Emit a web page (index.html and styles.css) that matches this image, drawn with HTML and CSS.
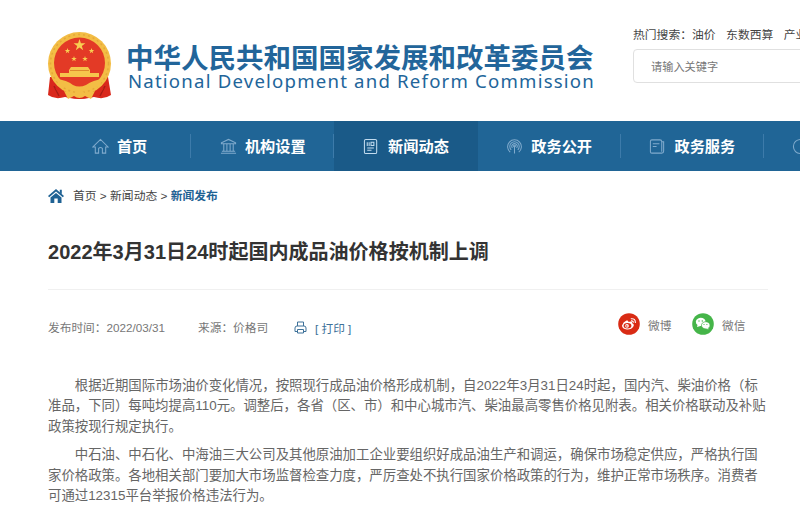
FILE: index.html
```html
<!DOCTYPE html>
<html lang="zh-CN">
<head>
  <meta charset="UTF-8">
  <meta name="viewport" content="width=device-width, initial-scale=1.0">
  <title>2022年3月31日24时起国内成品油价格按机制上调</title>
  <link rel="stylesheet" href="styles.css">
</head>
<body>
  <!-- Header -->
  <header class="header">
    <svg class="emblem" viewBox="0 0 66 70">
      <path d="M3 46 L1 64 Q8 69 18 66 L33 68 L47 66 Q57 69 64 64 L61 46 Z" fill="#d9281c"/>
      <path d="M7 55 L12 65 M58 55 L53 65" stroke="#a91d14" stroke-width="1.5"/>
      <circle cx="32.500" cy="32.500" r="31.500" fill="#f3bd45"/>
      <circle cx="32.500" cy="32.500" r="29" fill="none" stroke="#e5a93a" stroke-width="1.500" stroke-dasharray="2 3"/>
      <circle cx="32.500" cy="32" r="25.500" fill="#e33a26"/>
      <path d="M32.500 8 L33.900 12.300 H38.400 L34.800 15 L36.200 19.300 L32.500 16.600 L28.800 19.300 L30.200 15 L26.600 12.300 H31.100 Z" fill="#f8cf52"/>
      <g fill="#f8cf52">
        <path id="star" d="M20.500 17 L21.200 19 H23.300 L21.600 20.200 L22.200 22.300 L20.500 21 L18.800 22.300 L19.400 20.200 L17.700 19 H19.800 Z"/>
        <use href="#star" x="24"/>
        <use href="#star" x="6.500" y="8"/>
        <use href="#star" x="17.500" y="8"/>
      </g>
      <path d="M22 39 L24 36 H41 L43 39 V42 H52 V46 H13 V42 H22 Z" fill="#f6c64c"/>
      <path d="M23 39.500 H42" stroke="#dd8b2e"/>
      <path d="M9 48 Q20 49 26 54 Q32 57 39 54 Q46 49 56 48 L52 56 Q43 55 39 58 Q32 62 26 58 Q21 55 13 56 Z" fill="#f3bd45"/>
      <path d="M8 57 Q32 72 57 57 L52 64 Q32 72 13 64 Z" fill="#d9281c"/>
      <path d="M17 60 L27 62 Q32.500 58 38 62 L48 60 L44 68 L38 65 Q32.500 69 27 65 L21 68 Z" fill="#f3bd45"/>
    </svg>
    <div class="site-name">
      <div class="name-cn">中华人民共和国国家发展和改革委员会</div>
      <div class="name-en">National Development and Reform Commission</div>
    </div>
    <div class="search">
      <div class="hot"><span>热门搜索：油价</span><span>东数西算</span><span>产业</span></div>
      <div class="search-box">请输入关键字</div>
    </div>
  </header>

  <!-- Navigation -->
  <nav class="nav">
    <a class="nav-item">
      <svg class="nav-icon" viewBox="0 0 18 18"><path d="M1 9.500 L9 1.500 L17 9.500 H14.500 V16 H11 V11 Q9 9 7 11 V16 H3.500 V9.500 Z"/></svg>
      <span>首页</span>
    </a>
    <a class="nav-item">
      <svg class="nav-icon" viewBox="0 0 18 18"><path d="M1.500 6 V5 L9 1.500 L16.500 5 V6 Z M4 6 V14 M7.300 6 V14 M10.700 6 V14 M14 6 V14 M2 14 H16 M1 16.200 H17"/></svg>
      <span>机构设置</span>
    </a>
    <a class="nav-item active">
      <svg class="nav-icon" viewBox="0 0 18 18"><rect x="1.500" y="1.500" width="13" height="15" rx="1.500"/><path d="M4.500 4.500 V8.500 M6.500 4.500 V8.500 M8.500 4.500 H11.500 V8 H8.500 Z M4.500 10.500 H11.500 M4.500 13 H9"/></svg>
      <span>新闻动态</span>
    </a>
    <a class="nav-item">
      <svg class="nav-icon" viewBox="0 0 18 18"><path d="M4.500 15 A7.300 7.300 0 1 1 13.500 15 M5.500 12.500 A5 5 0 1 1 12.500 12.500 M6.800 10.500 A2.800 2.800 0 1 1 11.200 10.500 M9 8.500 V16.500"/><circle cx="9" cy="8.500" r="1"/></svg>
      <span>政务公开</span>
    </a>
    <a class="nav-item">
      <svg class="nav-icon" viewBox="0 0 18 18"><path d="M13.500 14.500 V4 Q13.500 2 11.500 2 H3 Q1.500 2 1.500 3.500 V14.500 Q1.500 16 3 16 H13.500 Q15.500 16 15.500 14 V4 H13.500 M4 6 H11 M4 9 H8"/></svg>
      <span>政务服务</span>
    </a>
    <a class="nav-item">
      <svg class="nav-icon" viewBox="0 0 18 18"><circle cx="9" cy="9" r="7.500"/><path d="M9 5 V9 H12"/></svg>
    </a>
  </nav>

  <main class="main">
    <div class="crumbs">
      <svg class="home" viewBox="0 0 16 14"><path d="M8 0 L16 7 L14.800 8.200 L8 2.500 L1.200 8.200 L0 7 Z M11.800 0.800 H13.800 V5 L11.800 3.200 Z M8 4 L13.500 8.500 V14 H9.700 V9.500 H6.300 V14 H2.500 V8.500 Z"/></svg>
      <span>首页 &gt; 新闻动态 &gt; <b>新闻发布</b></span>
    </div>

    <h1 class="title">2022年3月31日24时起国内成品油价格按机制上调</h1>

    <div class="meta">
      <span class="date">发布时间：2022/03/31</span>
      <span class="source">来源：价格司</span>
      <span class="print">
        <svg class="printer" viewBox="0 0 13 13"><path d="M3.500 5 V1 H9.500 V5 M3.500 10.500 H1 V7 Q1 5 3 5 H10 Q12 5 12 7 V10.500 H9.500 M3.500 8.500 H9.500 V12 H3.500 Z"/></svg>
        [ 打印 ]
      </span>
      <span class="share">
        <svg class="share-icon" viewBox="0 0 22 22">
          <circle cx="11" cy="11" r="10.800" fill="#d92b14"/>
          <path d="M4 12.500 Q5 9 8.500 7.600 Q10.700 7 10.400 9 Q14.500 7.600 14.200 10.200 Q16.500 11 15.500 13.200 Q13.500 16.600 9 16.400 Q4 16 4 12.500 Z" fill="#fff"/>
          <ellipse cx="9.500" cy="12.800" rx="3.900" ry="2.700" fill="#d92b14"/>
          <circle cx="9" cy="12.900" r="1.800" fill="#fff"/>
          <circle cx="8.800" cy="13" r="0.800" fill="#d92b14"/>
          <path d="M12.800 5.800 Q17.500 5 17.400 10 M13 7.900 Q15.500 7.600 15.300 9.800" fill="none" stroke="#fff" stroke-width="1.100"/>
        </svg>
        微博
      </span>
      <span class="share">
        <svg class="share-icon" viewBox="0 0 22 22">
          <circle cx="11" cy="11" r="10.800" fill="#45b549"/>
          <path d="M5 14 L5.500 12 A4.900 4.100 0 1 1 8.500 13 Z" fill="#fff"/>
          <path d="M17 16.500 L16.600 15 A4.300 3.600 0 1 0 14 15.900 Z" fill="#fff" stroke="#45b549" stroke-width="0.700"/>
          <g fill="#45b549"><circle cx="7" cy="8" r="0.700"/><circle cx="10.300" cy="8" r="0.700"/><circle cx="12" cy="11.500" r="0.600"/><circle cx="14.900" cy="11.500" r="0.600"/></g>
        </svg>
        微信
      </span>
    </div>

    <!-- Article -->
    <div class="article">
      <p>根据近期国际市场油价变化情况，按照现行成品油价格形成机制，自2022年3月31日24时起，国内汽、柴油价格（标<br>准品，下同）每吨均提高110元。调整后，各省（区、市）和中心城市汽、柴油最高零售价格见附表。相关价格联动及补贴<br>政策按现行规定执行。</p>
      <p>中石油、中石化、中海油三大公司及其他原油加工企业要组织好成品油生产和调运，确保市场稳定供应，严格执行国<br>家价格政策。各地相关部门要加大市场监督检查力度，严厉查处不执行国家价格政策的行为，维护正常市场秩序。消费者<br>可通过12315平台举报价格违法行为。</p>
    </div>
  </main>
</body>
</html>
```

FILE: styles.css
```css
* {
  box-sizing: border-box;
}

body {
  margin: 0;
  height: 505px;
  overflow: hidden;
  background: #fff;
  color: #444;
  font-family: "Liberation Sans", "Noto Sans CJK SC", sans-serif;
  font-size: 12px;
  white-space: nowrap;
}

/* Header */
.header {
  display: flex;
  height: 121px;
  padding-left: 47px;
  overflow: hidden;
}

.emblem {
  flex: none;
  width: 66px;
  height: 70px;
  margin-top: 31px;
}

.site-name {
  flex: none;
  width: 520px;
  padding: 45px 0 0 13px;
  color: #22659a;
}

.name-cn {
  font-size: 27.5px;
  font-weight: bold;
  line-height: 27px;
}

.name-en {
  padding-left: 2px;
  font-family: "Noto Sans", sans-serif;
  font-size: 18.6px;
  line-height: 18px;
  letter-spacing: 1.2px;
}

.search {
  flex: none;
  width: 240px;
  padding-top: 26px;
}

.hot {
  display: flex;
  gap: 10.5px;
  font-size: 11.8px;
  line-height: 18px;
}

.search-box {
  height: 34px;
  margin-top: 5px;
  padding-left: 17px;
  border: 1px solid #e0e0e0;
  border-radius: 4px;
  color: #777;
  font-size: 11.2px;
  line-height: 34px;
}

/* Navigation */
.nav {
  display: flex;
  height: 50px;
  padding-left: 48px;
  background: #206596;
  overflow: hidden;
}

.nav-item {
  display: flex;
  flex: none;
  align-items: center;
  justify-content: center;
  gap: 8px;
  width: 143.2px;
  color: #fff;
  font-size: 15.2px;
  font-weight: bold;
  background: linear-gradient(#3d7baa, #3d7baa) right center / 1px 24px no-repeat;
}

.nav-item span {
  padding-bottom: 2px;
}

.nav-item:last-child {
  justify-content: flex-start;
  padding-left: 28px;
}

.nav-item.active {
  background: #1a5a88;
}

.nav-icon {
  width: 17px;
  height: 17px;
  fill: none;
  stroke: #80abcd;
  stroke-width: 1.1;
}

.active .nav-icon {
  stroke: #c3dcef;
}

/* Content */
.main {
  padding: 0 32px 0 48px;
}

.crumbs {
  display: flex;
  align-items: center;
  gap: 9px;
  height: 50px;
  font-size: 11.8px;
}

.crumbs span {
  padding-bottom: 3px;
}

.crumbs b {
  color: #1f6294;
}

.home {
  width: 16px;
  height: 14px;
  fill: #1f6294;
}

.title {
  height: 69px;
  margin: 0;
  padding-top: 16px;
  border-bottom: 1px solid #f0f0f0;
  color: #333;
  font-size: 20.05px;
  line-height: 30px;
}

.meta {
  display: flex;
  align-items: center;
  height: 71px;
  padding-right: 2px;
  color: #777;
  font-size: 11.7px;
}

.date {
  width: 150px;
  padding-top: 2px;
}

.source {
  width: 96px;
  padding-top: 2px;
}

.print {
  display: flex;
  align-items: center;
  gap: 8px;
  margin-right: auto;
  padding-top: 4px;
  color: #3d7199;
}

.printer {
  width: 13px;
  height: 13px;
  fill: none;
  stroke: #3d7199;
}

.share {
  display: flex;
  align-items: center;
  gap: 8px;
  width: 74px;
  padding-bottom: 3px;
}

.share-icon {
  width: 22px;
  height: 22px;
}

.article {
  padding-top: 15px;
  color: #666;
  font-size: 13.4px;
  line-height: 20.4px;
}

.article p {
  margin: 0 0 8px;
  text-indent: 2em;
}
```
